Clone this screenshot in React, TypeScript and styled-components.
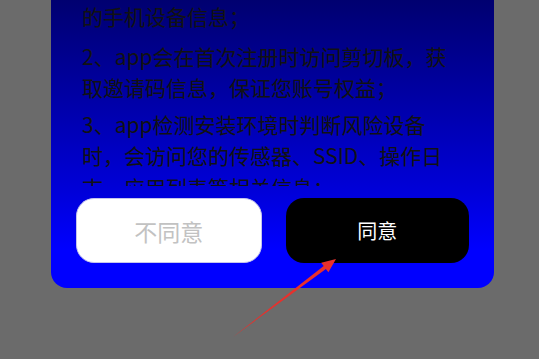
import styled, { createGlobalStyle } from "styled-components";

const GlobalStyle = createGlobalStyle`
  html, body {
    margin: 0;
    padding: 0;
  }
  body {
    background: #6b6b6b;
    font-family: "Noto Sans CJK SC", "Noto Sans", sans-serif;
  }
`;

const Screen = styled.div`
  position: relative;
  width: 539px;
  height: 359px;
  overflow: hidden;
  background: #6b6b6b;
`;

const Dialog = styled.div`
  margin-left: 51px;
  width: 443px;
  box-sizing: border-box;
  padding: 0 25px 25px;
  border-radius: 0 0 16px 16px;
  background: linear-gradient(180deg, #000070 0px, #0000d8 190px, #0000ff 250px);
  display: flex;
  flex-direction: column;
  gap: 12px;
`;

const Content = styled.div`
  height: 186px;
  overflow: hidden;
  padding-left: 6px;
  width: 368px;
`;

const Paragraph = styled.p`
  margin: 0 0 5px;
  font-size: 21px;
  line-height: 31.5px;
  color: #121212;

  &:first-child {
    margin-top: 1px;
    margin-bottom: 8px;
  }
`;

const Buttons = styled.div`
  display: flex;
  gap: 24px;
`;

const Button = styled.button<{ $primary?: boolean }>`
  flex: 1;
  height: 65px;
  border-radius: 18px;
  box-sizing: border-box;
  display: flex;
  align-items: center;
  justify-content: center;
  font-family: "Noto Sans CJK SC", "Noto Sans", sans-serif;
  cursor: pointer;
  border: ${(p) => (p.$primary ? "none" : "1.5px solid #c4c4ec")};
  background: ${(p) => (p.$primary ? "#000000" : "#ffffff")};
  color: ${(p) => (p.$primary ? "#ffffff" : "#c2c2c2")};
  font-size: ${(p) => (p.$primary ? "20px" : "23px")};
`;

const Arrow = styled.svg`
  position: absolute;
  left: 0;
  top: 0;
  pointer-events: none;
`;

export default function App() {
  return (
    <>
      <GlobalStyle />
      <Screen>
        <Dialog>
          <Content>
            <Paragraph>的手机设备信息；</Paragraph>
            <Paragraph>2、app会在首次注册时访问剪切板，获取邀请码信息，保证您账号权益；</Paragraph>
            <Paragraph>3、app检测安装环境时判断风险设备时，会访问您的传感器、SSID、操作日志，应用列表等相关信息；</Paragraph>
          </Content>
          <Buttons>
            <Button>不同意</Button>
            <Button $primary>同意</Button>
          </Buttons>
        </Dialog>
        <Arrow width="539" height="359" viewBox="0 0 539 359">
          <polygon
            points="233,337 323.7,266.1 321.2,262.7 336,259 328.4,272.3 325.9,268.9"
            fill="#e8302c"
          />
        </Arrow>
      </Screen>
    </>
  );
}
